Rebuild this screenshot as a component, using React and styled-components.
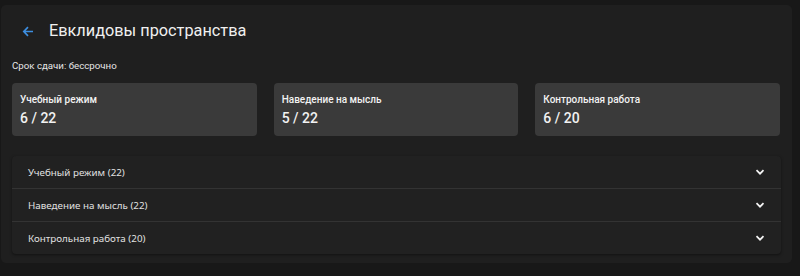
import styled, { createGlobalStyle } from "styled-components";

const GlobalStyle = createGlobalStyle`
  body {
    margin: 0;
    background: #181818;
    font-family: Roboto, "Noto Sans", sans-serif;
    color: #ececec;
  }
`;

const Page = styled.div`
  padding: 5px 8px 0 1px;
`;

const Panel = styled.div`
  height: 258px;
  box-sizing: border-box;
  background: #1f1f1f;
  border-radius: 5px;
  padding: 0 11px;
  display: flex;
  flex-direction: column;
`;

const Header = styled.div`
  display: flex;
  align-items: center;
  height: 26px;
  margin-top: 12px;
  padding-left: 10px;
  gap: 15px;
`;

const Back = styled.button`
  background: none;
  border: none;
  padding: 0;
  width: 12px;
  height: 16px;
  display: flex;
  align-items: center;
  justify-content: center;
  color: #3d8ee0;
  margin-top: 2px;
`;

const Title = styled.h1`
  margin: 0;
  font-size: 16.3px;
  font-weight: 400;
  color: #f0f0f0;
`;

const Deadline = styled.div`
  margin-top: 17px;
  font-size: 9.7px;
  line-height: 12px;
  color: #e6e6e6;
`;

const Cards = styled.div`
  display: grid;
  grid-template-columns: repeat(3, 1fr);
  gap: 17px;
  margin-top: 11px;
  padding-right: 1px;
`;

const Card = styled.div`
  background: #3a3a3a;
  border-radius: 4px;
  height: 53px;
  box-sizing: border-box;
  padding: 11px 8px 0;
`;

const CardLabel = styled.div`
  font-size: 10px;
  font-weight: 500;
  line-height: 12px;
  color: #f2f2f2;
`;

const CardValue = styled.div`
  margin-top: 4px;
  font-size: 14px;
  font-weight: 500;
  line-height: 16px;
  color: #f2f2f2;
`;

const Accordion = styled.div`
  margin-top: 20px;
  background: #212121;
  border-radius: 4px;
  box-shadow: 0 1px 3px rgba(0, 0, 0, 0.45);
`;

const Row = styled.div`
  display: flex;
  align-items: center;
  justify-content: space-between;
  height: 32px;
  padding: 0 16px;
  border-top: ${(p) => (p.$first ? "none" : "1px solid #333")};
  font-family: "Noto Sans", "Open Sans", sans-serif;
  font-size: 9.8px;
  color: #e0e0e0;
`;

const Chevron = () => (
  <svg width="10" height="10" viewBox="0 0 10 10">
    <path d="M1.5 3.2 L5 6.7 L8.5 3.2" fill="none" stroke="#f4f4f4" strokeWidth="1.7" />
  </svg>
);

const cards = [
  { label: "Учебный режим", value: "6 / 22" },
  { label: "Наведение на мысль", value: "5 / 22" },
  { label: "Контрольная работа", value: "6 / 20" },
];

const rows = ["Учебный режим (22)", "Наведение на мысль (22)", "Контрольная работа (20)"];

export default function App() {
  return (
    <Page>
      <GlobalStyle />
      <Panel>
        <Header>
          <Back>
            <svg width="12" height="11" viewBox="0 0 12 11">
              <path d="M11 5.5 H1.8 M6 1.2 L1.8 5.5 L6 9.8" fill="none" stroke="currentColor" strokeWidth="1.7" />
            </svg>
          </Back>
          <Title>Евклидовы пространства</Title>
        </Header>
        <Deadline>Срок сдачи: бессрочно</Deadline>
        <Cards>
          {cards.map((c) => (
            <Card key={c.label}>
              <CardLabel>{c.label}</CardLabel>
              <CardValue>{c.value}</CardValue>
            </Card>
          ))}
        </Cards>
        <Accordion>
          {rows.map((r, i) => (
            <Row key={r} $first={i === 0}>
              <span>{r}</span>
              <Chevron />
            </Row>
          ))}
        </Accordion>
      </Panel>
    </Page>
  );
}
